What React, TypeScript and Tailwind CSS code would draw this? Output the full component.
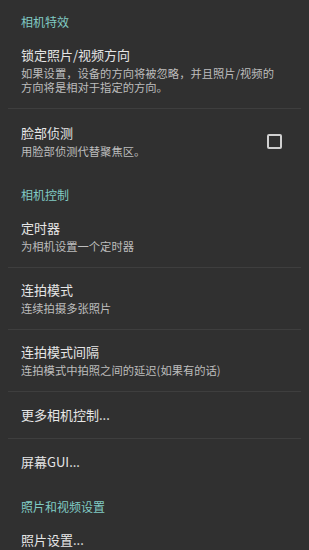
import React from "react";

const font = { fontFamily: '"Noto Sans CJK SC", "Noto Sans", sans-serif' };

function Header({ text }: { text: string }) {
  return (
    <div className="pt-[14px] pb-[2px] pl-[21px]">
      <div className="text-[12px] leading-[16px] text-[#80cbc4]">{text}</div>
    </div>
  );
}

function Divider() {
  return <div className="mx-[8px] h-px bg-[#3e3e3e]" />;
}

function Item({
  title,
  summary,
  pt = "pt-[14px]",
  pb = "pb-[14px]",
  checkbox = false,
}: {
  title: string;
  summary?: string[];
  pt?: string;
  pb?: string;
  checkbox?: boolean;
}) {
  return (
    <div className={`flex items-center pl-[21px] pr-[27px] ${pt} ${pb}`}>
      <div className="flex-1 min-w-0">
        <div className="text-[13px] leading-[18px] text-[#e6e6e6]">{title}</div>
        {summary && (
          <div className="mt-[2px] text-[11.3px] leading-[14px] text-[#bdbdbd]">
            {summary.map((s, i) => (
              <div key={i} className="whitespace-nowrap">
                {s}
              </div>
            ))}
          </div>
        )}
      </div>
      {checkbox && (
        <div className="ml-4 h-[15px] w-[15px] rounded-[2px] border-2 border-[#d0d0d0]" />
      )}
    </div>
  );
}

export default function App() {
  return (
    <div className="h-[550px] w-[309px] overflow-hidden bg-[#303030]" style={font}>
      <Header text="相机特效" />
      <Item
        title="锁定照片/视频方向"
        summary={["如果设置，设备的方向将被忽略，并且照片/视频的", "方向将是相对于指定的方向。"]}
      />
      <Divider />
      <Item
        title="脸部侦测"
        summary={["用脸部侦测代替聚焦区。"]}
        pt="pt-[15px]"
        pb="pb-[15px]"
        checkbox
      />
      <Header text="相机控制" />
      <Item title="定时器" summary={["为相机设置一个定时器"]} />
      <Divider />
      <Item title="连拍模式" summary={["连续拍摄多张照片"]} pt="pt-[13px]" />
      <Divider />
      <Item
        title="连拍模式间隔"
        summary={["连拍模式中拍照之间的延迟(如果有的话)"]}
        pt="pt-[13px]"
      />
      <Divider />
      <Item title="更多相机控制..." pt="pt-[14px]" pb="pb-[14px]" />
      <Divider />
      <Item title="屏幕GUI..." pt="pt-[14px]" pb="pb-[14px]" />
      <Header text="照片和视频设置" />
      <Item title="照片设置..." />
    </div>
  );
}
